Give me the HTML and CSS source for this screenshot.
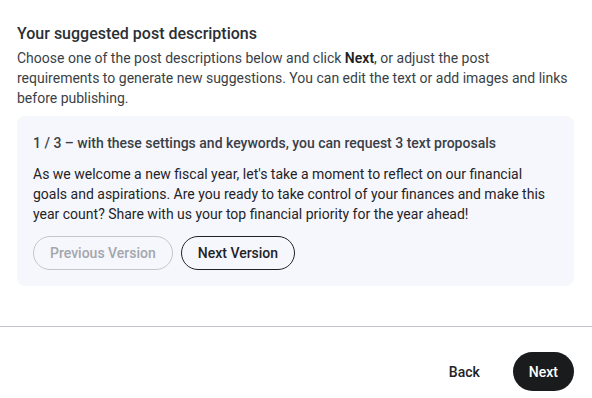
FILE: index.html
```html
<!DOCTYPE html>
<html lang="en">
<head>
  <meta charset="UTF-8">
  <meta name="viewport" content="width=device-width, initial-scale=1.0">
  <title>Suggested post descriptions</title>
  <link rel="stylesheet" href="styles.css">
</head>
<body>
  <div class="step">
    <h2>Your suggested post descriptions</h2>
    <p class="intro">Choose one of the post descriptions below and click <strong>Next</strong>, or adjust the post requirements to generate new suggestions. You can edit the text or add images and links before publishing.</p>

    <div class="proposal">
      <h3>1 / 3 – with these settings and keywords, you can request 3 text proposals</h3>
      <p>As we welcome a new fiscal year, let's take a moment to reflect on our financial goals and aspirations. Are you ready to take control of your finances and make this year count? Share with us your top financial priority for the year ahead!</p>
      <div class="versions">
        <button class="outline" disabled>Previous Version</button>
        <button class="outline">Next Version</button>
      </div>
    </div>
  </div>

  <div class="footer">
    <button class="link">Back</button>
    <button class="primary">Next</button>
  </div>
</body>
</html>
```

FILE: styles.css
```css
body {
  margin: 0;
  font-family: Roboto, "Liberation Sans", Arial, sans-serif;
  color: #2b2f36;
  background: white;
}
.step {
  padding: 24px 18px 0 17px;
  height: 302px;
}
h2 {
  margin: 0;
  font-size: 16px;
  line-height: 20px;
  font-weight: 500;
  color: #2b2f36;
}
.intro {
  margin: 4px 0 0;
  font-size: 14px;
  line-height: 20px;
  color: #3a3f47;
}
.intro strong {
  font-weight: 600;
  color: #1c1f24;
}
.proposal {
  margin-top: 8px;
  background: #f6f7fc;
  border-radius: 8px;
  padding: 17px 16px 16px;
  height: 137px;
}
h3 {
  margin: 0;
  font-size: 14px;
  line-height: 20px;
  font-weight: 500;
  color: #3a3f47;
}
.proposal p {
  margin: 11px 0 0;
  font-size: 14px;
  line-height: 20px;
  color: #1f2328;
}
.versions {
  display: flex;
  gap: 8px;
  margin-top: 12px;
}
button {
  font-family: inherit;
  font-size: 14px;
  font-weight: 500;
  cursor: pointer;
}
.outline {
  height: 34px;
  padding: 0 16px;
  border: 1px solid #1f2328;
  border-radius: 17px;
  background: transparent;
  color: #1f2328;
}
.outline:disabled {
  border-color: #c4c6cb;
  color: #a3a6ac;
  cursor: default;
}
.footer {
  border-top: 1px solid #c1c5ca;
  display: flex;
  justify-content: flex-end;
  align-items: center;
  gap: 17px;
  padding: 25px 18px 0;
}
.link {
  background: none;
  border: none;
  color: #1f2328;
  padding: 0 16px;
  height: 39px;
}
.primary {
  height: 39px;
  padding: 0 16px;
  border: none;
  border-radius: 20px;
  background: #1a1b1d;
  color: white;
}
```
